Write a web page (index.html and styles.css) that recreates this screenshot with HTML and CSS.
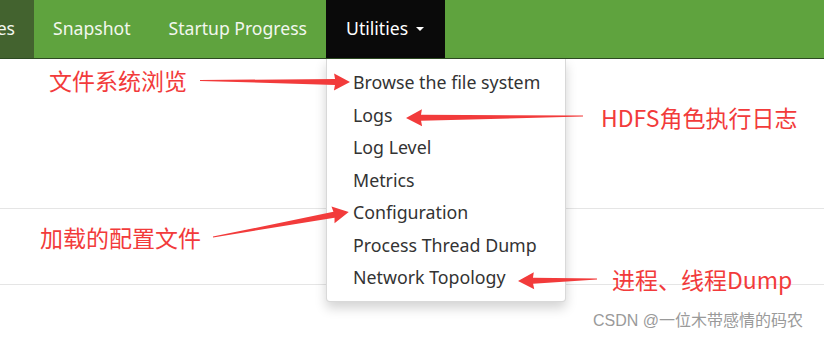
FILE: index.html
```html
<!DOCTYPE html>
<html lang="en">
<head>
    <meta charset="UTF-8">
    <title>Utilities</title>
    <link rel="stylesheet" href="styles.css">
</head>
<body>
    <div class="page">
        <nav class="navbar">
            <a class="nav-item nav-prev">es</a>
            <a class="nav-item">Snapshot</a>
            <a class="nav-item">Startup Progress</a>
            <a class="nav-item nav-open">Utilities <span class="caret"></span></a>
        </nav>

        <div class="content">
            <div class="row row-top"></div>
            <div class="row row-mid"></div>
        </div>

        <ul class="dropdown">
            <li>Browse the file system</li>
            <li>Logs</li>
            <li>Log Level</li>
            <li>Metrics</li>
            <li>Configuration</li>
            <li>Process Thread Dump</li>
            <li>Network Topology</li>
        </ul>

        <!-- annotations -->
        <svg class="arrows" width="824" height="338" viewBox="0 0 824 338">
            <g fill="#f23b3b">
                <polygon transform="translate(200 80.5) rotate(0.6)" points="0,-0.4 135,-3 134,-8.5 150,0 134,8.5 135,3 0,0.4"/>
                <polygon transform="translate(583 116) rotate(179.35)" points="0,-0.4 162,-3 161,-8.5 177,0 161,8.5 162,3 0,0.4"/>
                <polygon transform="translate(213 237) rotate(-10.4)" points="0,-0.4 123,-3 122,-8.5 138,0 122,8.5 123,3 0,0.4"/>
                <polygon transform="translate(597 279) rotate(178.5)" points="0,-0.4 64,-3 63,-8.5 79,0 63,8.5 64,3 0,0.4"/>
            </g>
        </svg>
        <span class="note note-browse">文件系统浏览</span>
        <span class="note note-logs">HDFS角色执行日志</span>
        <span class="note note-conf">加载的配置文件</span>
        <span class="note note-dump">进程、线程Dump</span>
        <span class="watermark">CSDN @一位木带感情的码农</span>
    </div>
</body>
</html>
```

FILE: styles.css
```css
* {
    margin: 0;
    padding: 0;
    box-sizing: border-box;
}

body {
    font-family: "Noto Sans", "Noto Sans CJK SC", sans-serif;
    background-color: #ffffff;
    color: #333;
}

.page {
    position: relative;
    width: 824px;
    height: 338px;
    overflow: hidden;
}

.navbar {
    display: flex;
    height: 59px;
    background-color: #5fa33e;
    border-bottom: 1px solid #2d4a22;
}

.nav-item {
    display: flex;
    align-items: center;
    padding: 0 19px 3px;
    color: #f2f7ee;
    font-size: 17.6px;
    white-space: nowrap;
}

.nav-prev {
    width: 34px;
    padding: 0 19px 3px 0;
    justify-content: flex-end;
    overflow: hidden;
    background-color: #43632f;
}

.nav-open {
    width: 119px;
    padding-left: 20px;
    background-color: #0a0a0a;
    color: #ffffff;
}

.caret {
    display: inline-block;
    width: 0;
    height: 0;
    margin-left: 8px;
    margin-top: 2px;
    border-top: 4px solid #fff;
    border-left: 4px solid transparent;
    border-right: 4px solid transparent;
}

.row {
    border-bottom: 1px solid #e5e5e5;
}

.row-top {
    height: 150px;
}

.row-mid {
    height: 76px;
}

.dropdown {
    position: absolute;
    left: 326px;
    top: 59px;
    width: 240px;
    list-style: none;
    padding: 7px 0 7px;
    background-color: #fff;
    border: 1px solid rgba(0, 0, 0, 0.15);
    border-top: none;
    border-radius: 0 0 4px 4px;
    box-shadow: 0 6px 12px rgba(0, 0, 0, 0.175);
}

.dropdown li {
    height: 32.5px;
    line-height: 32.5px;
    padding-left: 26px;
    font-size: 17.8px;
    color: #333;
    white-space: nowrap;
}

.arrows {
    position: absolute;
    left: 0;
    top: 0;
}

.note {
    position: absolute;
    color: #f23b3b;
    font-family: "Noto Sans CJK SC", sans-serif;
    font-size: 23px;
    line-height: 1;
    white-space: nowrap;
}

.note-browse { left: 49px; top: 69px; }
.note-logs { left: 601px; top: 106px; }
.note-conf { left: 40px; top: 226px; }
.note-dump { left: 612px; top: 268px; }

.watermark {
    position: absolute;
    left: 593px;
    top: 311px;
    font-family: "Liberation Sans", "Noto Sans CJK SC", sans-serif;
    font-size: 16px;
    line-height: 20px;
    color: #9a9a9a;
    white-space: nowrap;
}
```
